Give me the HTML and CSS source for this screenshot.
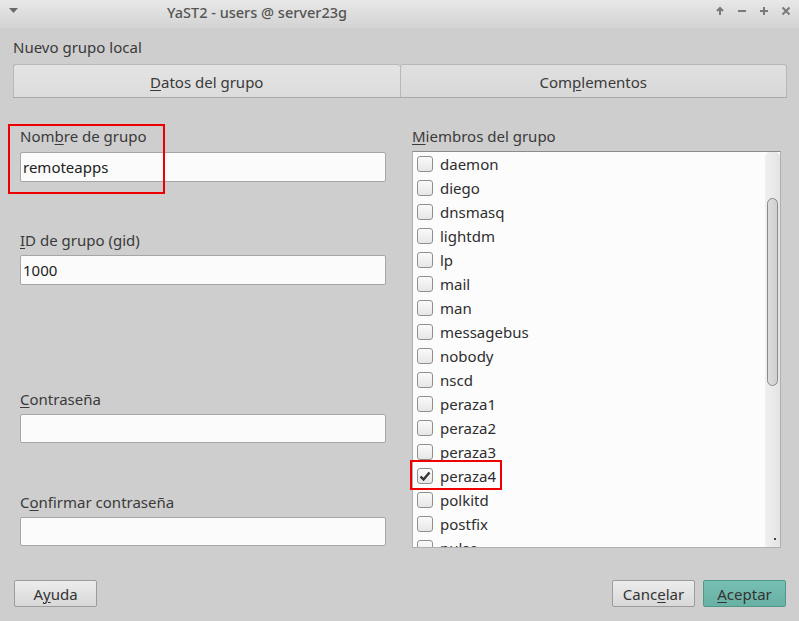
FILE: index.html
```html
<!DOCTYPE html>
<html lang="es">
<head>
<meta charset="utf-8">
<title>YaST2 - users @ server23g</title>
<link rel="stylesheet" href="styles.css">
</head>
<body>
<div class="window">
  <header class="titlebar">
    <svg class="menu-arrow" width="9" height="6" viewBox="0 0 9 6"><path d="M0 0h9L4.5 5z" fill="#6a6a6a"/></svg>
    <div class="title">YaST2 - users @ server23g</div>
    <div class="wm-buttons">
      <svg width="10" height="10" viewBox="0 0 10 10"><path d="M5 9V2M2 5l3-3 3 3" stroke="#7a7a7a" stroke-width="2" fill="none"/></svg>
      <svg width="10" height="10" viewBox="0 0 10 10"><path d="M1 5h8" stroke="#7a7a7a" stroke-width="2"/></svg>
      <svg width="10" height="10" viewBox="0 0 10 10"><path d="M1 5h8M5 1v8" stroke="#7a7a7a" stroke-width="2"/></svg>
      <svg width="10" height="10" viewBox="0 0 10 10"><path d="M1.5 1.5l7 7M8.5 1.5l-7 7" stroke="#7a7a7a" stroke-width="2"/></svg>
    </div>
  </header>

  <main class="content">
    <div class="dialog-title">Nuevo grupo local</div>

    <nav class="tabs">
      <div class="tab active"><u>D</u>atos del grupo</div>
      <div class="tab">Com<u>p</u>lementos</div>
    </nav>

    <section class="panel">
      <div class="left">
        <div class="field f1">
          <label>Nom<u>b</u>re de grupo</label>
          <div class="input">remoteapps</div>
          <div class="mark mark1"></div>
        </div>
        <div class="field f2">
          <label><u>I</u>D de grupo (gid)</label>
          <div class="input">1000</div>
        </div>
        <div class="field f3">
          <label><u>C</u>ontraseña</label>
          <div class="input"></div>
        </div>
        <div class="field f4">
          <label>C<u>o</u>nfirmar contraseña</label>
          <div class="input"></div>
        </div>
      </div>

      <div class="right">
        <label class="list-label"><u>M</u>iembros del grupo</label>
        <div class="listbox">
          <ul class="items">
            <li><span class="cb"></span>daemon</li>
            <li><span class="cb"></span>diego</li>
            <li><span class="cb"></span>dnsmasq</li>
            <li><span class="cb"></span>lightdm</li>
            <li><span class="cb"></span>lp</li>
            <li><span class="cb"></span>mail</li>
            <li><span class="cb"></span>man</li>
            <li><span class="cb"></span>messagebus</li>
            <li><span class="cb"></span>nobody</li>
            <li><span class="cb"></span>nscd</li>
            <li><span class="cb"></span>peraza1</li>
            <li><span class="cb"></span>peraza2</li>
            <li><span class="cb"></span>peraza3</li>
            <li><span class="cb checked"><svg width="12" height="10" viewBox="0 0 12 10"><path d="M1.5 5.5l3 3 6-7" stroke="#333" stroke-width="2.4" fill="none"/></svg></span>peraza4</li>
            <li><span class="cb"></span>polkitd</li>
            <li><span class="cb"></span>postfix</li>
            <li><span class="cb"></span>pulse</li>
          </ul>
          <div class="scrollbar">
            <div class="thumb"></div>
            <div class="dot"></div>
          </div>
          <div class="mark mark2"></div>
        </div>
      </div>
    </section>

    <footer class="buttons">
      <button class="btn"><span>A<u>y</u>uda</span></button>
      <div class="spacer"></div>
      <button class="btn"><span>Canc<u>e</u>lar</span></button>
      <button class="btn primary"><span><u>A</u>ceptar</span></button>
    </footer>
  </main>
</div>
</body>
</html>
```

FILE: styles.css
```css
* { box-sizing: border-box; }
html, body { margin: 0; padding: 0; }
body {
  width: 799px;
  height: 621px;
  overflow: hidden;
  background: #cecece;
  font-family: "Noto Sans", "Open Sans", sans-serif;
  font-size: 15px;
  color: #3a3a3a;
}
u { text-decoration: underline; text-underline-offset: 2px; text-decoration-thickness: 1px; }

.window { width: 799px; height: 621px; display: flex; flex-direction: column; }

.titlebar {
  height: 28px;
  flex: none;
  display: flex;
  align-items: center;
  background: linear-gradient(#e8e8e8, #d3d3d3);
}
.menu-arrow { margin-left: 9px; margin-top: -6px; }
.title {
  margin-left: 149px;
  color: #555;
  font-size: 14.5px;
  font-weight: 500;
  margin-top: -4px;
}
.wm-buttons {
  margin-left: auto;
  margin-right: 8px;
  margin-top: -6px;
  display: flex;
  gap: 12px;
}

.content { flex: 1; display: flex; flex-direction: column; padding: 0 12px 0 13px; }

.dialog-title { margin-top: 9px; line-height: 20px; height: 20px; }

.tabs {
  margin-top: 7px;
  display: flex;
  height: 34px;
  border-bottom: 1px solid #a9a9a9;
}
.tab {
  flex: 1;
  display: flex;
  align-items: center;
  justify-content: center;
  border: 1px solid #b8b8b8;
  border-bottom: none;
  border-radius: 3px 3px 0 0;
  background: linear-gradient(#e0e0e0, #d8d8d8);
  padding-top: 2px;
}
.tab.active { background: linear-gradient(#e4e4e4, #dcdcdc); border-right: none; }

.panel { display: flex; height: 478px; padding-top: 28px; }
.left { width: 399px; flex: none; padding-left: 7px; padding-right: 26px; }
.right { flex: 1; }

label { display: block; line-height: 20px; height: 20px; }

.field { position: relative; }
.field .input {
  height: 30px;
  margin-top: 6px;
  background: #fbfbfb;
  border: 1px solid #a6a6a6;
  border-radius: 2px;
  padding-left: 2px;
  line-height: 28px;
  font-size: 15px;
  color: #222;
}
.f2 { margin-top: 48px; }
.f2 .input { margin-top: 5px; }
.f3 { margin-top: 104px; }
.f3 .input { margin-top: 5px; height: 29px; }
.f4 { margin-top: 49px; }
.f4 .input { margin-top: 5px; height: 29px; }

.mark { position: absolute; border: 2px solid #ee0000; pointer-events: none; }
.mark1 { left: -12px; top: -2px; width: 157px; height: 70px; }

.listbox {
  margin-top: 5px;
  width: 369px;
  height: 397px;
  background: #fcfcfc;
  border: 1px solid #b0b0b0;
  border-top-color: #8c8c8c;
  display: flex;
  position: relative;
}
.items { list-style: none; margin: 0; padding: 0; flex: 1; overflow: hidden; }
.items li {
  height: 24px;
  display: flex;
  align-items: center;
  font-size: 15px;
  color: #2e2e2e;
}
.cb {
  width: 16px;
  height: 16px;
  flex: none;
  margin-left: 4px;
  margin-right: 7px;
  border: 1px solid #8f8f8f;
  border-radius: 3px;
  background: linear-gradient(#fafafa, #e6e6e6);
  display: flex;
  align-items: center;
  justify-content: center;
}
.mark2 { left: -3px; top: 308px; width: 92px; height: 30px; }

.scrollbar {
  width: 15px;
  flex: none;
  background: linear-gradient(90deg, #f0f0f0, #e4e4e4);
  border-radius: 5px 5px 0 0;
  position: relative;
}
.thumb {
  position: absolute;
  left: 2px;
  top: 46px;
  width: 11px;
  height: 188px;
  border: 1px solid #8a8a8a;
  border-radius: 6px;
  background: linear-gradient(90deg, #dcdcdc, #d0d0d0);
}
.dot { position: absolute; left: 9px; bottom: 7px; width: 2px; height: 2px; background: #444; }

.buttons { display: flex; align-items: center; height: 27px; margin-top: 4px; gap: 8px; padding-left: 1px; padding-right: 1px; }
.spacer { flex: 1; }
.btn {
  width: 83px;
  height: 27px;
  flex: none;
  border: 1px solid #9c9c9c;
  border-radius: 2px;
  background: linear-gradient(#ececec, #d8d8d8);
  font-family: inherit;
  font-size: 15px;
  color: #333;
  padding: 0;
  display: flex;
  align-items: center;
  justify-content: center;
}
.btn.primary { background: linear-gradient(#78bfb3, #68b0a4); border-color: #4f978b; }
```
